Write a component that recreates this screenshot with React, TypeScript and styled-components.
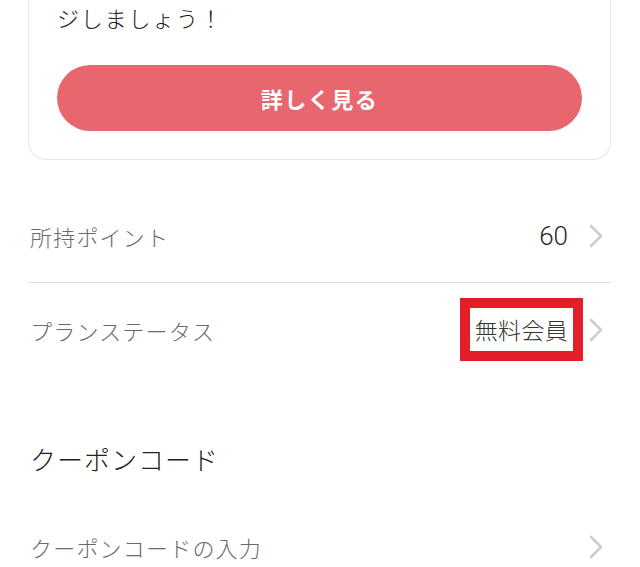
import styled, { createGlobalStyle } from "styled-components";

const GlobalStyle = createGlobalStyle`
  html, body {
    margin: 0;
    padding: 0;
    background: #ffffff;
  }

  body {
    font-family: "Noto Sans CJK JP", "Noto Sans", sans-serif;
    -webkit-font-smoothing: antialiased;
  }
`;

const StyledPage = styled.div`
  display: flex;
  flex-direction: column;
  padding: 0 29px 0 28px;
`;

const StyledCard = styled.section`
  display: flex;
  flex-direction: column;
  padding: 0 28px 28px;
  border: 1px solid #e6e6e6;
  border-top: none;
  border-radius: 0 0 18px 18px;
`;

const StyledLead = styled.p`
  margin: 0;
  font-size: 22px;
  font-weight: 300;
  line-height: 34px;
  color: #222222;
  letter-spacing: 1.8px;
`;

const StyledButton = styled.button`
  margin-top: 31px;
  height: 66px;
  border: none;
  border-radius: 33px;
  background: #e8676f;
  color: #ffffff;
  font-family: inherit;
  font-size: 22px;
  font-weight: 700;
  letter-spacing: 1.5px;
  cursor: pointer;
`;

const StyledList = styled.ul`
  list-style: none;
  margin: 29px 0 0;
  padding: 0;
`;

const StyledRow = styled.li<{ $divider?: boolean; $height: number }>`
  display: flex;
  align-items: center;
  justify-content: space-between;
  height: ${({ $height }) => $height}px;
  border-bottom: ${({ $divider }) => ($divider ? "1px solid #e2e2e2" : "none")};
`;

const StyledLabel = styled.span`
  padding-left: 2px;
  font-size: 22px;
  font-weight: 300;
  color: #6a6a6a;
  letter-spacing: 1.2px;
`;

const StyledTrailing = styled.div<{ $gap: number }>`
  display: flex;
  align-items: center;
  gap: ${({ $gap }) => $gap}px;
  padding-right: 8px;
`;

const StyledNumber = styled.span`
  font-family: Roboto, "Liberation Sans", sans-serif;
  font-size: 26px;
  font-weight: 300;
  color: #2a2a2a;
`;

const StyledHighlight = styled.span`
  display: inline-block;
  padding: 0 5px 0 5px;
  border: 10px solid #e41e26;
  font-size: 23px;
  font-weight: 300;
  line-height: 43px;
  color: #333333;
  letter-spacing: 0.3px;
`;

const StyledHeading = styled.h2`
  margin: 0;
  padding: 66px 0 0 2px;
  font-size: 26px;
  font-weight: 300;
  line-height: 34px;
  color: #222222;
  letter-spacing: 1px;
`;

const Chevron = () => (
  <svg width="14" height="24" viewBox="0 0 14 24" fill="none">
    <path
      d="M2 2 L12 12 L2 22"
      stroke="#cdcdcd"
      strokeWidth="2.6"
      strokeLinecap="round"
      strokeLinejoin="round"
    />
  </svg>
);

const App = () => (
  <>
    <GlobalStyle />
    <StyledPage>
      <StyledCard>
        <StyledLead>ジしましょう！</StyledLead>
        <StyledButton type="button">詳しく見る</StyledButton>
      </StyledCard>

      <StyledList>
        <StyledRow $divider $height={93}>
          <StyledLabel>所持ポイント</StyledLabel>
          <StyledTrailing $gap={21}>
            <StyledNumber>60</StyledNumber>
            <Chevron />
          </StyledTrailing>
        </StyledRow>
        <StyledRow $height={93}>
          <StyledLabel>プランステータス</StyledLabel>
          <StyledTrailing $gap={6}>
            <StyledHighlight>無料会員</StyledHighlight>
            <Chevron />
          </StyledTrailing>
        </StyledRow>
      </StyledList>

      <StyledHeading>クーポンコード</StyledHeading>

      <StyledList>
        <StyledRow $height={84}>
          <StyledLabel>クーポンコードの入力</StyledLabel>
          <StyledTrailing $gap={0}>
            <Chevron />
          </StyledTrailing>
        </StyledRow>
      </StyledList>
    </StyledPage>
  </>
);

export default App;
